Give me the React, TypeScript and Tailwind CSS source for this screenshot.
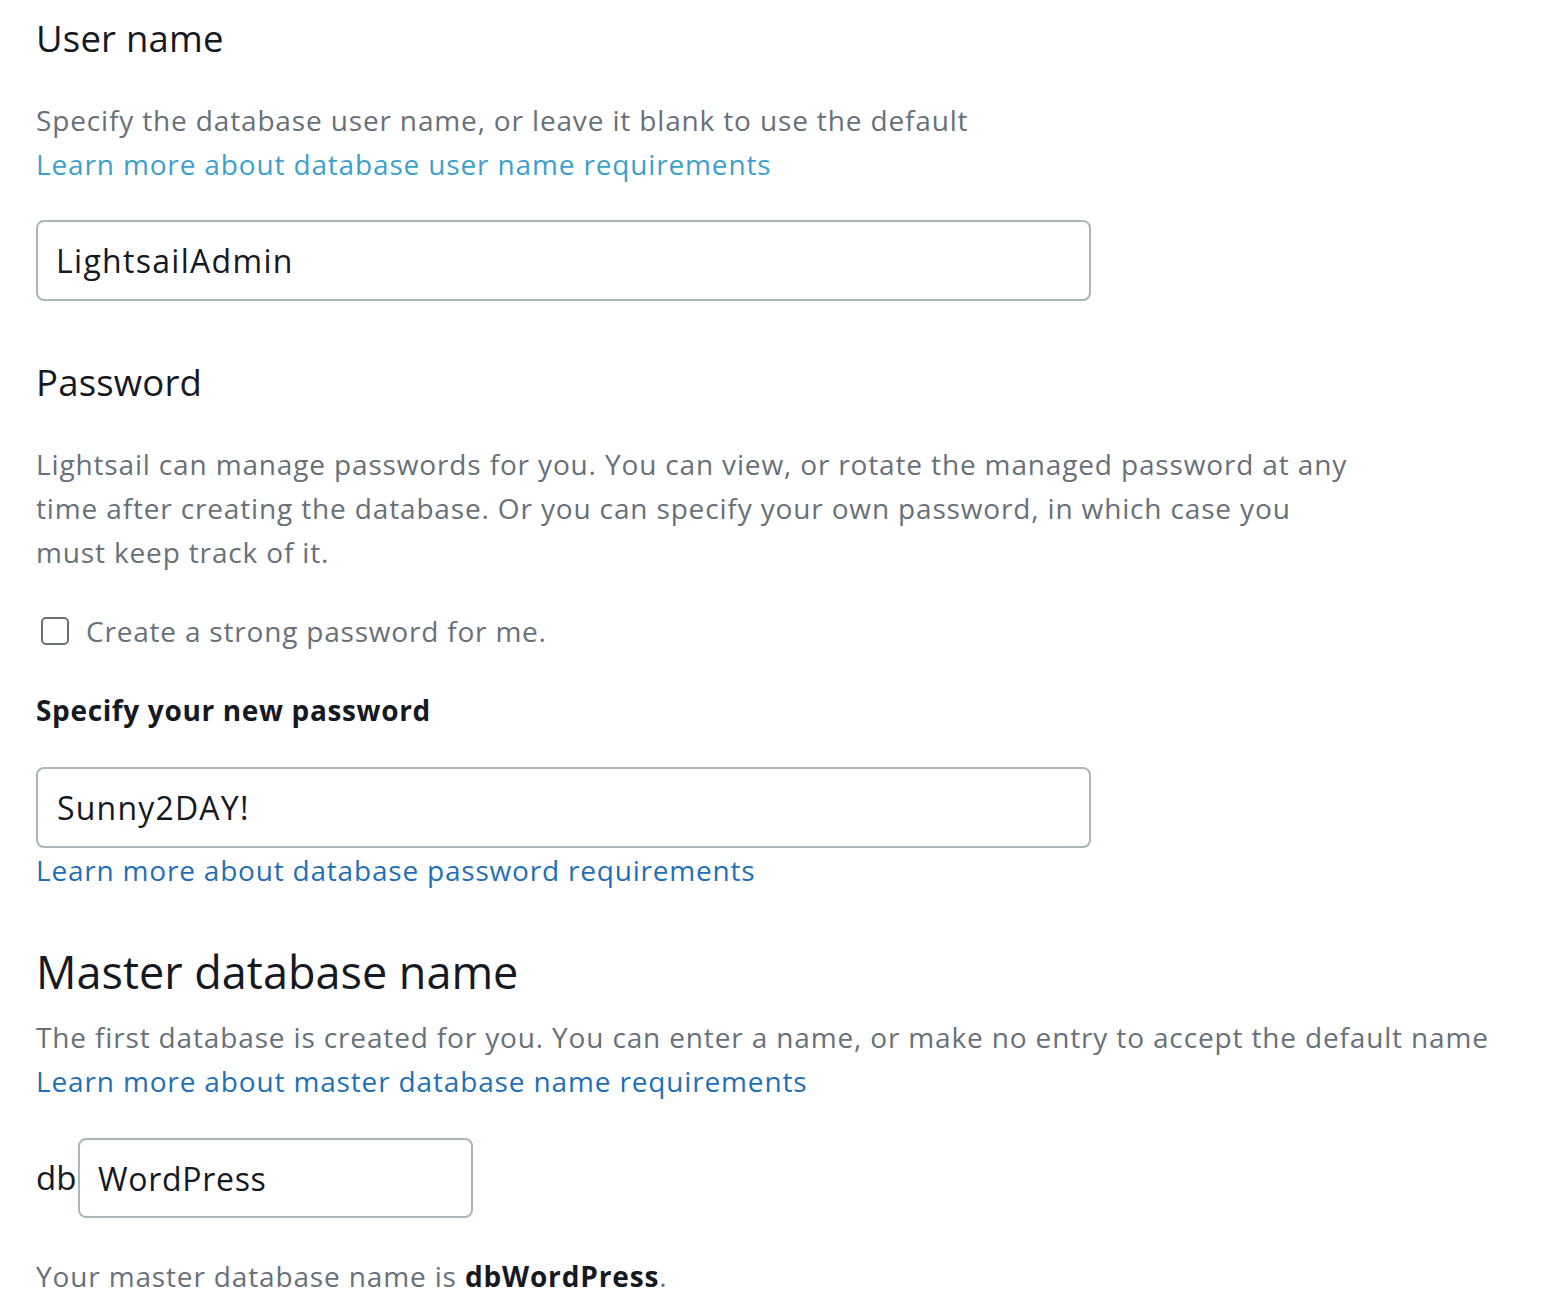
import { useState } from "react";

const FONT = "font-['Open_Sans',sans-serif]";

export default function App() {
  const [userName, setUserName] = useState("LightsailAdmin");
  const [password, setPassword] = useState("Sunny2DAY!");
  const [dbName, setDbName] = useState("WordPress");
  const [strong, setStrong] = useState(false);

  return (
    <div className={`${FONT} min-h-screen bg-white pl-[36px] pt-[14px] pb-[8px] text-[#16191f]`}>
      {/* User name */}
      <h2 className="text-[36.5px] leading-[48px] font-normal tracking-[0.2px]">User name</h2>
      <div className="mt-[36px] text-[28px] leading-[44px] tracking-[0.85px]">
        <p className="text-[#687078]">
          Specify the database user name, or leave it blank to use the default
        </p>
        <a href="#" className="text-[#3d9fcc]">
          Learn more about database user name requirements
        </a>
      </div>
      <input
        value={userName}
        onChange={(e) => setUserName(e.target.value)}
        className="mt-[34px] block h-[81px] w-[1055px] rounded-[8px] border-2 border-[#aab7b8] bg-white px-[18px] text-[32px] tracking-[1.3px] text-[#16191f] outline-none"
      />

      {/* Password */}
      <h2 className="mt-[57px] text-[36.5px] leading-[48px] font-normal tracking-[0.2px]">Password</h2>
      <p className="mt-[36px] text-[28px] leading-[44px] tracking-[0.85px] text-[#687078]">
        Lightsail can manage passwords for you. You can view, or rotate the managed password at any
        <br />
        time after creating the database. Or you can specify your own password, in which case you
        <br />
        must keep track of it.
      </p>
      <label className="mt-[35px] flex h-[44px] items-center text-[28px] tracking-[0.8px] text-[#687078]">
        <input
          type="checkbox"
          checked={strong}
          onChange={(e) => setStrong(e.target.checked)}
          className="ml-[5px] h-[28px] w-[28px] appearance-none rounded-[5px] border-2 border-[#687078] bg-white"
        />
        <span className="ml-[17px]">Create a strong password for me.</span>
      </label>
      <div className="mt-[35px] text-[28px] leading-[44px] font-bold tracking-[0.65px]">
        Specify your new password
      </div>
      <input
        value={password}
        onChange={(e) => setPassword(e.target.value)}
        className="mt-[35px] block h-[81px] w-[1055px] rounded-[8px] border-2 border-[#aab7b8] bg-white px-[19px] text-[32px] tracking-[1.2px] text-[#16191f] outline-none"
      />
      <a href="#" className="block text-[28px] leading-[44px] tracking-[0.8px] text-[#1f6fb8]">
        Learn more about database password requirements
      </a>

      {/* Master database name */}
      <h2 className="mt-[52px] text-[45px] leading-[56px] font-normal">Master database name</h2>
      <div className="mt-[15px] text-[28px] leading-[44px] tracking-[0.85px]">
        <p className="text-[#687078]">
          The first database is created for you. You can enter a name, or make no entry to accept the default name
        </p>
        <a href="#" className="text-[#1f6fb8]">
          Learn more about master database name requirements
        </a>
      </div>
      <div className="mt-[35px] flex items-center">
        <span className="w-[42px] text-[33px]">db</span>
        <input
          value={dbName}
          onChange={(e) => setDbName(e.target.value)}
          className="block h-[80px] w-[395px] rounded-[8px] border-2 border-[#aab7b8] bg-white px-[18px] text-[32px] tracking-[0.7px] text-[#16191f] outline-none"
        />
      </div>
      <p className="mt-[36px] text-[28px] leading-[44px] tracking-[0.85px] text-[#687078]">
        Your master database name is <span className="font-bold text-[#16191f]">db{dbName}</span>.
      </p>
    </div>
  );
}
